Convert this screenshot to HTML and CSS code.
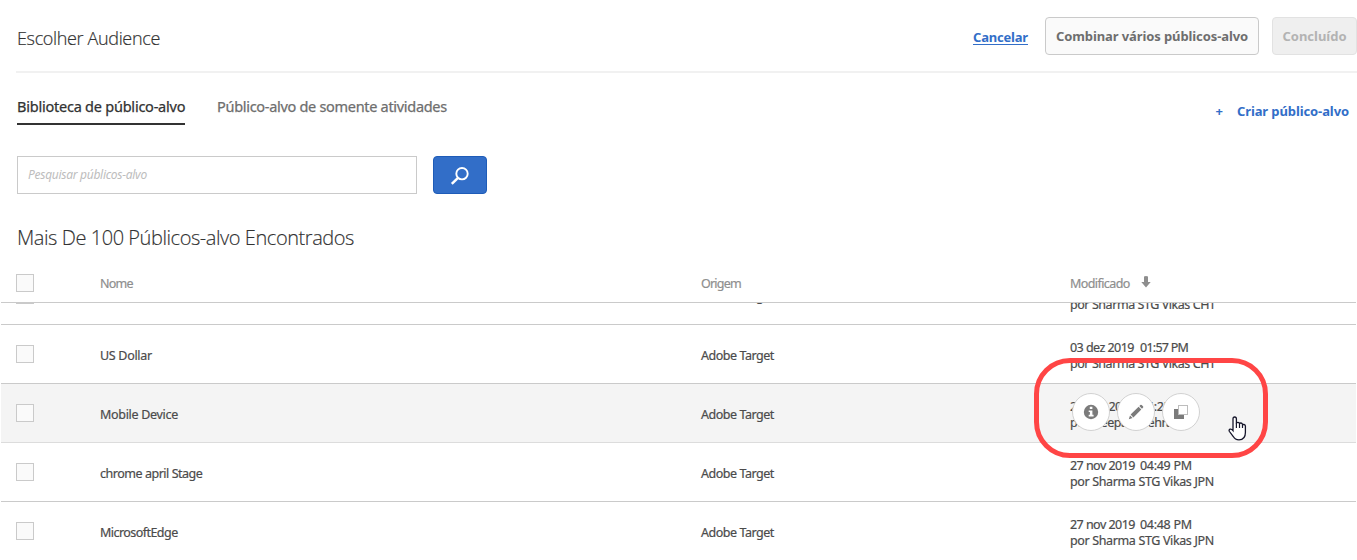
FILE: index.html
```html
<!DOCTYPE html>
<html lang="pt-BR">
<head>
<meta charset="utf-8">
<title>Escolher Audience</title>
<link rel="stylesheet" href="styles.css">
</head>
<body>
<header class="topbar">
  <h1 class="title">Escolher Audience</h1>
  <a class="cancel" href="#">Cancelar</a>
  <button class="btn combine">Combinar vários públicos-alvo</button>
  <button class="btn done" disabled>Concluído</button>
</header>
<nav class="tabs">
  <a class="tab tab-active">Biblioteca de público-alvo</a>
  <a class="tab tab-other">Público-alvo de somente atividades</a>
  <a class="create"><span class="plus">+</span><span>Criar público-alvo</span></a>
</nav>
<div class="search">
  <input class="search-input" type="text" placeholder="Pesquisar públicos-alvo">
  <button class="search-btn" aria-label="Pesquisar">
    <svg width="20" height="20" viewBox="0 0 20 20" fill="none" stroke="#fff"><circle cx="12" cy="8.7" r="5.7" stroke-width="1.9"/><path d="M8 12.8L1.8 18.8" stroke-width="2.5"/></svg>
  </button>
</div>
<h2 class="count">Mais De 100 Públicos-alvo Encontrados</h2>
<div class="grid head">
  <span class="check"></span>
  <span class="nome">Nome</span>
  <span class="origem">Origem</span>
  <span class="mod">Modificado <svg class="sort" width="10" height="12" viewBox="0 0 10 12"><path d="M3 0.5Q5 -.3 7 .5V6H9.7L5 11.5L.3 6H3Z" fill="#8e8e8e"/></svg></span>
</div>
<main class="list">
  <div class="scroll">
    <div class="grid row">
      <span class="check"></span><span class="name"></span><span class="origin">Adobe Target</span>
      <div class="when"><div class="date"><span>03 dez 2019</span><span class="time">01:58 PM</span></div><div class="by">por Sharma STG Vikas CHT</div></div>
    </div>
    <div class="grid row">
      <span class="check"></span><span class="name wide">US Dollar</span><span class="origin">Adobe Target</span>
      <div class="when"><div class="date"><span>03 dez 2019</span><span class="time narrow">01:57 PM</span></div><div class="by">por Sharma STG Vikas CHT</div></div>
    </div>
    <div class="grid row hover">
      <span class="check"></span><span class="name wide">Mobile Device</span><span class="origin">Adobe Target</span>
      <div class="when"><div class="date"><span>27 nov 2019</span><span class="time">04:25 PM</span></div><div class="by">por Deepak Mehra</div>
        <div class="actions">
          <span class="act"><svg width="16" height="16" viewBox="0 0 16 16"><circle cx="8" cy="8" r="7.2" fill="#7b7b7b"/><path d="M6.8 2.8h2.6v2.3H6.8zM5.7 6.4h3.7v4.4h1.2v1.7H5.7v-1.7h1.2V8H5.7z" fill="#fff"/></svg></span>
          <span class="act"><svg width="16" height="16" viewBox="0 0 16 16" fill="#7b7b7b"><path d="M.8 15.2L2 11.4L4.6 14ZM2.6 10.6L10.6 2.7L13.3 5.4L5.4 13.4ZM11.3 2L12.4 .9Q13 .4 13.7 1L15 2.3Q15.6 3 15.1 3.6L14 4.7Z"/></svg></span>
          <span class="act"><svg width="16" height="16" viewBox="0 0 16 16"><path d="M1 5H5V11H11V15H1Z" fill="#7b7b7b"/><path d="M5.5 1.5H14.5V10.5H5.5Z" fill="#fff" stroke="#7b7b7b" stroke-dasharray="1 1"/></svg></span>
        </div>
      </div>
    </div>
    <div class="grid row">
      <span class="check"></span><span class="name">chrome april Stage</span><span class="origin">Adobe Target</span>
      <div class="when"><div class="date"><span>27 nov 2019</span><span class="time">04:49 PM</span></div><div class="by jpn">por Sharma STG Vikas JPN</div></div>
    </div>
    <div class="grid row">
      <span class="check"></span><span class="name edge">MicrosoftEdge</span><span class="origin">Adobe Target</span>
      <div class="when"><div class="date"><span>27 nov 2019</span><span class="time">04:48 PM</span></div><div class="by jpn">por Sharma STG Vikas JPN</div></div>
    </div>
  </div>
</main>
<div class="callout"></div>
<svg class="cursor" width="19" height="25" viewBox="0 0 19 25"><path d="M5 14.5V3Q5 1 6.7 1T8.4 3V7.5Q8.6 6.3 10 6.4T11.5 7.8V8Q11.7 6.8 13 7T14.5 8.5V9.3Q14.7 8.3 16 8.5T17.4 10V16.5Q17.4 23.8 11 23.8Q7 23.8 5.3 20.5L1.3 15.3Q.7 13.8 2 13.2T5 14.7Z" fill="#fff" stroke="#15152a" stroke-width="1.3"/><path d="M8.4 7V12M11.5 8V12M14.5 9V12" stroke="#15152a" stroke-width="1.2" fill="none"/></svg>
</body>
</html>
```
FILE: styles.css
```css
* { box-sizing: border-box; }
body {
  margin: 0;
  height: 560px;
  overflow: hidden;
  position: relative;
  background: #fff;
  color: #4b4b4b;
  font: 12.5px/16px "Noto Sans", "Open Sans", sans-serif;
  display: flex;
  flex-direction: column;
}
.topbar {
  display: flex;
  align-items: center;
  height: 73px;
  margin-left: 16px;
  border-bottom: 2px solid #f1f1f1;
  flex: none;
}
.title {
  margin: 4px auto 0 1px;
  font: 300 18px/24px "Open Sans", sans-serif;
  letter-spacing: -.35px;
  color: #323232;
  -webkit-text-stroke: .2px;
}
.cancel {
  margin: 3px 17px 0 0;
  font-size: 13px;
  font-weight: 700;
  letter-spacing: -.19px;
  color: #326ec8;
  text-underline-offset: 2px;
}
.btn {
  height: 38px;
  padding: 0;
  border: 1px solid #cacaca;
  border-radius: 4px;
  background: #fafafa;
  color: #6e6e6e;
  font: 700 13px/18px "Noto Sans", sans-serif;
  letter-spacing: -.1px;
}
.combine { width: 214px; margin-right: 13px; }
.done { width: 85px; background: #efefef; border-color: #e2e2e2; color: #b3b3b3; letter-spacing: 0; }
.tabs {
  display: flex;
  align-items: flex-start;
  gap: 32px;
  padding: 23px 8px 0 17px;
  height: 83px;
  flex: none;
}
.tab {
  font-size: 14.5px;
  line-height: 20px;
  color: #6e6e6e;
  height: 29px;
  white-space: nowrap;
  -webkit-text-stroke: .25px;
}
.tab-active { width: 168px; color: #323232; letter-spacing: -.23px; border-bottom: 2px solid #323232; }
.tab-other { letter-spacing: -.3px; }
.create {
  display: flex;
  gap: 14px;
  margin: 6px 0 0 auto;
  color: #326ec8;
  font-size: 13px;
  line-height: 18px;
  font-weight: 700;
  letter-spacing: -.1px;
}
.search { display: flex; gap: 16px; padding-left: 17px; height: 38px; flex: none; }
.search-input {
  width: 400px;
  padding: 0 10px;
  border: 1px solid #cacaca;
  font: italic 12px/16px "Noto Sans", sans-serif;
  letter-spacing: -.28px;
}
.search-input::placeholder { color: #bdbdbd; opacity: 1; }
.search-btn {
  width: 54px;
  padding: 0;
  border: 1px solid #1e5cb8;
  border-radius: 4px;
  background: #326ec8;
  display: flex;
  align-items: center;
  justify-content: center;
}
.count {
  margin: 0;
  padding: 30px 0 0 17px;
  height: 70px;
  flex: none;
  font: 300 20px/28px "Open Sans", sans-serif;
  letter-spacing: -.44px;
  color: #323232;
  -webkit-text-stroke: .15px;
}
.grid {
  display: grid;
  grid-template-columns: 84px 601px 369px 1fr;
  align-items: center;
  margin: 0 1px;
  padding-left: 15px;
  -webkit-text-stroke: .2px;
}
.head {
  height: 39px;
  flex: none;
  border-bottom: 1px solid #cacaca;
  color: #8e8e8e;
}
.nome, .origem, .mod { padding-top: 2px; }
.nome { letter-spacing: -.75px; }
.origem { letter-spacing: -.8px; }
.mod { letter-spacing: -.58px; }
.sort { margin-left: 9px; vertical-align: 0; }
.check { width: 18px; height: 18px; border: 1px solid #cacaca; background: #fafafa; }
.list { flex: 1; overflow: hidden; }
.scroll { margin-top: -37px; }
.row { height: 59px; border-bottom: 1px solid #cacaca; }
.row .check { margin-top: -1px; }
.hover { background: #f4f4f4; border-color: #dcdcdc; }
.name, .origin { letter-spacing: -.47px; padding-top: 4px; }
.name.wide { letter-spacing: -.3px; }
.name.edge { letter-spacing: -.55px; }
.when { position: relative; letter-spacing: -.44px; padding-top: 4px; }
.by.jpn { letter-spacing: -.36px; }
.date { display: flex; gap: 6px; }
.date span:first-child { width: 64px; white-space: nowrap; letter-spacing: -.54px; }
.date .time { letter-spacing: -.3px; }
.date .narrow { letter-spacing: -.75px; }
.actions { position: absolute; left: 2px; top: -2px; display: flex; gap: 7px; }
.act {
  width: 38px;
  height: 38px;
  border: 1px solid #d2d2d2;
  border-radius: 50%;
  background: #fff;
  display: flex;
  align-items: center;
  justify-content: center;
}
.callout {
  position: absolute;
  left: 1034px;
  top: 358px;
  width: 234px;
  height: 100px;
  border: 5px solid #ff4545;
  border-radius: 36px;
}
.cursor { position: absolute; left: 1228px; top: 416px; }
```
